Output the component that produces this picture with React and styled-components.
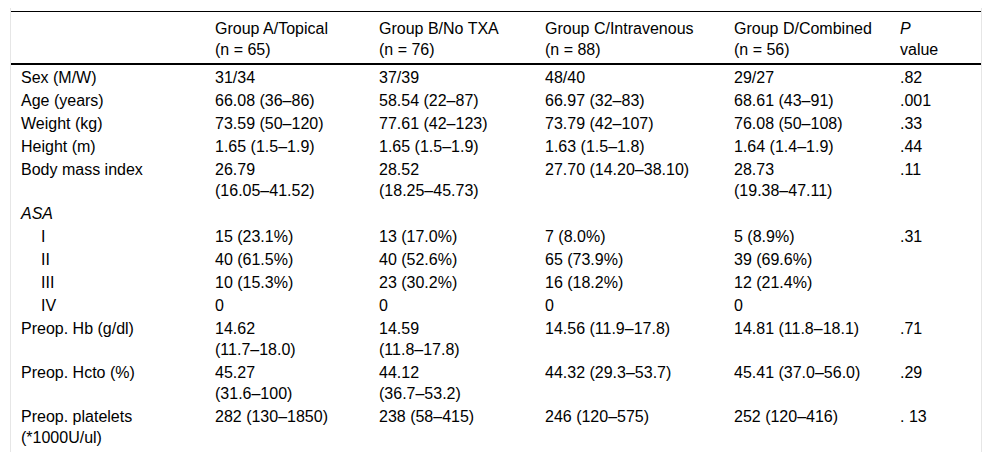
import React from 'react';
import styled, { createGlobalStyle } from 'styled-components';

const GlobalStyle = createGlobalStyle`
  html, body {
    margin: 0;
    background: #fff;
  }
  body {
    font-family: "Liberation Sans", Arial, sans-serif;
    color: #000;
  }
`;

const Frame = styled.div`
  margin: 8px 0 0 10px;
  width: 970px;
  padding-top: 3px;
  border-left: 1px solid #e6e6e6;
  border-right: 1px solid #e6e6e6;
`;

const Table = styled.table`
  width: 970px;
  margin-bottom: -2px;
  border-collapse: collapse;
  table-layout: fixed;
  font-size: 16px;
  line-height: 21px;
  border-top: 1px solid #000;
  border-bottom: 1px solid #000;
`;

const HeadRow = styled.tr`
  border-bottom: 2px solid #000;
`;

const Th = styled.th`
  padding: 6px 10px 3px;
  text-align: left;
  vertical-align: top;
  font-weight: normal;
`;

const Row = styled.tr`
  &:first-child td {
    padding-top: 2px;
  }
  &:last-child td {
    padding-bottom: 5px;
  }
`;

const Td = styled.td`
  padding: 1px 10px;
  vertical-align: top;
  white-space: pre-line;
  padding-left: ${({ $indent }) => ($indent ? '30px' : '10px')};
  font-style: ${({ $italic }) => ($italic ? 'italic' : 'normal')};
`;

const widths = [194, 164, 166, 189, 166, 91];

const groups = [
  ['Group A/Topical', '(n = 65)'],
  ['Group B/No TXA', '(n = 76)'],
  ['Group C/Intravenous', '(n = 88)'],
  ['Group D/Combined', '(n = 56)'],
];

const rows = [
  { label: 'Sex (M/W)', cells: ['31/34', '37/39', '48/40', '29/27', '.82'] },
  { label: 'Age (years)', cells: ['66.08 (36–86)', '58.54 (22–87)', '66.97 (32–83)', '68.61 (43–91)', '.001'] },
  { label: 'Weight (kg)', cells: ['73.59 (50–120)', '77.61 (42–123)', '73.79 (42–107)', '76.08 (50–108)', '.33'] },
  { label: 'Height (m)', cells: ['1.65 (1.5–1.9)', '1.65 (1.5–1.9)', '1.63 (1.5–1.8)', '1.64 (1.4–1.9)', '.44'] },
  {
    label: 'Body mass index',
    cells: ['26.79\n(16.05–41.52)', '28.52\n(18.25–45.73)', '27.70 (14.20–38.10)', '28.73\n(19.38–47.11)', '.11'],
  },
  { label: 'ASA', italic: true, cells: ['', '', '', '', ''] },
  { label: 'I', indent: true, cells: ['15 (23.1%)', '13 (17.0%)', '7 (8.0%)', '5 (8.9%)', '.31'] },
  { label: 'II', indent: true, cells: ['40 (61.5%)', '40 (52.6%)', '65 (73.9%)', '39 (69.6%)', ''] },
  { label: 'III', indent: true, cells: ['10 (15.3%)', '23 (30.2%)', '16 (18.2%)', '12 (21.4%)', ''] },
  { label: 'IV', indent: true, cells: ['0', '0', '0', '0', ''] },
  {
    label: 'Preop. Hb (g/dl)',
    cells: ['14.62\n(11.7–18.0)', '14.59\n(11.8–17.8)', '14.56 (11.9–17.8)', '14.81 (11.8–18.1)', '.71'],
  },
  {
    label: 'Preop. Hcto (%)',
    cells: ['45.27\n(31.6–100)', '44.12\n(36.7–53.2)', '44.32 (29.3–53.7)', '45.41 (37.0–56.0)', '.29'],
  },
  {
    label: 'Preop. platelets\n(*1000U/ul)',
    cells: ['282 (130–1850)', '238 (58–415)', '246 (120–575)', '252 (120–416)', '. 13'],
  },
];

const App = () => (
  <>
    <GlobalStyle />
    <Frame>
      <Table>
        <colgroup>
          {widths.map((w, i) => (
            <col key={i} style={{ width: w }} />
          ))}
        </colgroup>
        <thead>
          <HeadRow>
            <Th />
            {groups.map(([name, n]) => (
              <Th key={name}>
                {name}
                <br />
                {n}
              </Th>
            ))}
            <Th>
              <i>P</i>
              <br />
              value
            </Th>
          </HeadRow>
        </thead>
        <tbody>
          {rows.map((row) => (
            <Row key={row.label}>
              <Td $indent={row.indent} $italic={row.italic}>
                {row.label}
              </Td>
              {row.cells.map((c, i) => (
                <Td key={i}>{c}</Td>
              ))}
            </Row>
          ))}
        </tbody>
      </Table>
    </Frame>
  </>
);

export default App;
